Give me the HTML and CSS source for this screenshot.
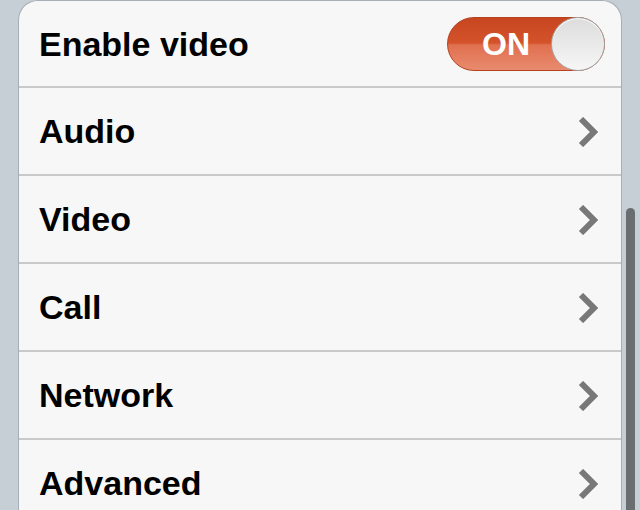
FILE: index.html
```html
<!DOCTYPE html>
<html>
<head>
<meta charset="utf-8">
<link rel="stylesheet" href="styles.css">
</head>
<body>
<div class="group">
  <div class="row">
    <span class="label">Enable video</span>
    <div class="switch">
      <span class="switch-text">ON</span>
      <span class="knob"></span>
    </div>
  </div>
  <div class="row">
    <span class="label">Audio</span>
    <svg class="chev" width="22" height="30" viewBox="0 0 22 30"><polyline points="3,2 16,15 3,28" fill="none" stroke="#787878" stroke-width="6"/></svg>
  </div>
  <div class="row">
    <span class="label">Video</span>
    <svg class="chev" width="22" height="30" viewBox="0 0 22 30"><polyline points="3,2 16,15 3,28" fill="none" stroke="#787878" stroke-width="6"/></svg>
  </div>
  <div class="row">
    <span class="label">Call</span>
    <svg class="chev" width="22" height="30" viewBox="0 0 22 30"><polyline points="3,2 16,15 3,28" fill="none" stroke="#787878" stroke-width="6"/></svg>
  </div>
  <div class="row">
    <span class="label">Network</span>
    <svg class="chev" width="22" height="30" viewBox="0 0 22 30"><polyline points="3,2 16,15 3,28" fill="none" stroke="#787878" stroke-width="6"/></svg>
  </div>
  <div class="row">
    <span class="label">Advanced</span>
    <svg class="chev" width="22" height="30" viewBox="0 0 22 30"><polyline points="3,2 16,15 3,28" fill="none" stroke="#787878" stroke-width="6"/></svg>
  </div>
</div>
<div class="scrollbar"></div>
</body>
</html>
```

FILE: styles.css
```css
html, body {
  margin: 0;
  padding: 0;
  height: 510px;
  overflow: hidden;
}
body {
  background: #c6cfd6;
  font-family: "Liberation Sans", Arial, sans-serif;
  position: relative;
}
.group {
  margin-left: 18px;
  width: 602px;
  background: #f7f7f7;
  border: 1px solid #a6afb7;
  border-bottom: none;
  border-radius: 20px 20px 0 0;
  overflow: hidden;
}
.row {
  height: 88px;
  box-sizing: border-box;
  border-bottom: 2px solid #c9c9c9;
  display: flex;
  align-items: center;
  justify-content: space-between;
  padding: 0 21px 0 20px;
}
.row:first-child {
  height: 87px;
  padding-right: 16px;
}
.label {
  font-size: 34px;
  font-weight: bold;
  color: #000;
  padding-top: 1px;
}
.chev {
  display: block;
  margin-top: 2px;
}
.switch {
  width: 158px;
  height: 54px;
  box-sizing: border-box;
  border-radius: 27px;
  border: 1px solid #b5421f;
  background: linear-gradient(to bottom, #c8461f 0%, #d5532b 48%, #e07050 52%, #e98b6e 100%);
  display: flex;
  align-items: center;
  justify-content: space-between;
  position: relative;
  margin-top: 1px;
}
.switch-text {
  color: #fff;
  font-size: 32px;
  font-weight: bold;
  padding-left: 34px;
  padding-top: 1px;
}
.knob {
  width: 54px;
  height: 54px;
  box-sizing: border-box;
  border-radius: 50%;
  border: 1px solid #a3a3a3;
  background: linear-gradient(to bottom, #dcdcdc 0%, #ececec 60%, #f6f6f6 100%);
  box-shadow: inset 0 1px 1px #fff;
  margin-right: -1px;
}
.scrollbar {
  position: absolute;
  left: 626px;
  top: 208px;
  width: 9px;
  height: 310px;
  border-radius: 5px;
  background: #6a6e71;
}
```
